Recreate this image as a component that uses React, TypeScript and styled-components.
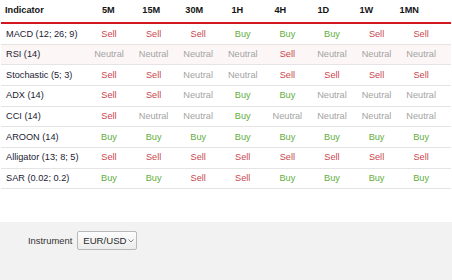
import React from "react"
import styled, { createGlobalStyle } from "styled-components"

type Signal = "Buy" | "Sell" | "Neutral"

interface IRow {
  name: string
  values: Signal[]
}

const periods = ["5M", "15M", "30M", "1H", "4H", "1D", "1W", "1MN"]

const rows: IRow[] = [
  { name: "MACD (12; 26; 9)", values: ["Sell", "Sell", "Sell", "Buy", "Buy", "Buy", "Sell", "Sell"] },
  { name: "RSI (14)", values: ["Neutral", "Neutral", "Neutral", "Neutral", "Sell", "Neutral", "Neutral", "Neutral"] },
  { name: "Stochastic (5; 3)", values: ["Sell", "Sell", "Neutral", "Neutral", "Sell", "Sell", "Sell", "Sell"] },
  { name: "ADX (14)", values: ["Sell", "Sell", "Neutral", "Buy", "Buy", "Neutral", "Neutral", "Neutral"] },
  { name: "CCI (14)", values: ["Sell", "Neutral", "Neutral", "Buy", "Neutral", "Neutral", "Neutral", "Neutral"] },
  { name: "AROON (14)", values: ["Buy", "Buy", "Buy", "Buy", "Buy", "Buy", "Buy", "Buy"] },
  { name: "Alligator (13; 8; 5)", values: ["Sell", "Sell", "Sell", "Sell", "Sell", "Sell", "Sell", "Sell"] },
  { name: "SAR (0.02; 0.2)", values: ["Buy", "Buy", "Sell", "Sell", "Buy", "Buy", "Buy", "Buy"] }
]

const signalColors: Record<Signal, string> = {
  Buy: "#5fae3c",
  Sell: "#c8464f",
  Neutral: "#a3a3a3"
}

const App: React.FC = () => (
  <Page>
    <GlobalStyle />
    <Table>
      <HeaderRow>
        <HeadName>Indicator</HeadName>
        {periods.map(p => (
          <HeadCell key={p}>{p}</HeadCell>
        ))}
      </HeaderRow>
      {rows.map((row, i) => (
        <BodyRow key={row.name} highlighted={i === 1}>
          <NameCell>{row.name}</NameCell>
          {row.values.map((v, j) => (
            <ValueCell key={j} signal={v}>
              {v}
            </ValueCell>
          ))}
        </BodyRow>
      ))}
    </Table>
    <Footer>
      <Label>Instrument</Label>
      <Select>
        EUR/USD
        <svg width="6" height="4" viewBox="0 0 6 4">
          <path d="M0.5 0.5 L3 3 L5.5 0.5" fill="none" stroke="#777" strokeWidth="0.9" />
        </svg>
      </Select>
    </Footer>
  </Page>
)

const GlobalStyle = createGlobalStyle`
  body {
    margin: 0;
    background: #ffffff;
    font-family: "Liberation Sans", Arial, sans-serif;
  }
`

const Page = styled.div`
  display: flex;
  flex-direction: column;
  width: 452px;
  height: 280px;
  overflow: hidden;
`

const Table = styled.div`
  display: flex;
  flex-direction: column;
  padding: 0 1px;
`

const HeaderRow = styled.div`
  display: grid;
  grid-template-columns: 85.8px repeat(8, 43px) 1fr;
  padding: 4px 0 5.35px;
  border-bottom: 2px solid #d4171f;
  font-size: 9.2px;
  line-height: 12.65px;
  font-weight: bold;
  color: #151515;
`

const HeadName = styled.div`
  padding-left: 4px;
`

const HeadCell = styled.div`
  text-align: center;
`

const BodyRow = styled.div<{ highlighted?: boolean }>`
  display: grid;
  grid-template-columns: 85.7px repeat(8, 44.6px) 1fr;
  padding: 3.5px 0;
  border-bottom: 1px solid #e4e4e4;
  background: ${p => (p.highlighted ? "#fcf6f6" : "#ffffff")};
  font-size: 9.2px;
  line-height: 12.65px;
`

const NameCell = styled.div`
  padding-left: 5px;
  color: #222233;
  white-space: nowrap;
`

const ValueCell = styled.div<{ signal: Signal }>`
  text-align: center;
  color: ${p => signalColors[p.signal]};
`

const Footer = styled.div`
  margin-top: auto;
  height: 58px;
  box-sizing: border-box;
  background: #f2f2f2;
  display: flex;
  align-items: flex-start;
  padding: 9px 0 0 28px;
  gap: 5px;
`

const Label = styled.span`
  font-size: 9.4px;
  line-height: 19px;
  color: #333;
`

const Select = styled.div`
  box-sizing: border-box;
  width: 60px;
  height: 19px;
  display: flex;
  align-items: center;
  gap: 2px;
  padding-left: 5px;
  border: 1px solid #b9b9b9;
  border-radius: 2px;
  background: linear-gradient(#fdfdfd, #ececec);
  font-size: 9.6px;
  color: #2a2a2a;
`

export default App
